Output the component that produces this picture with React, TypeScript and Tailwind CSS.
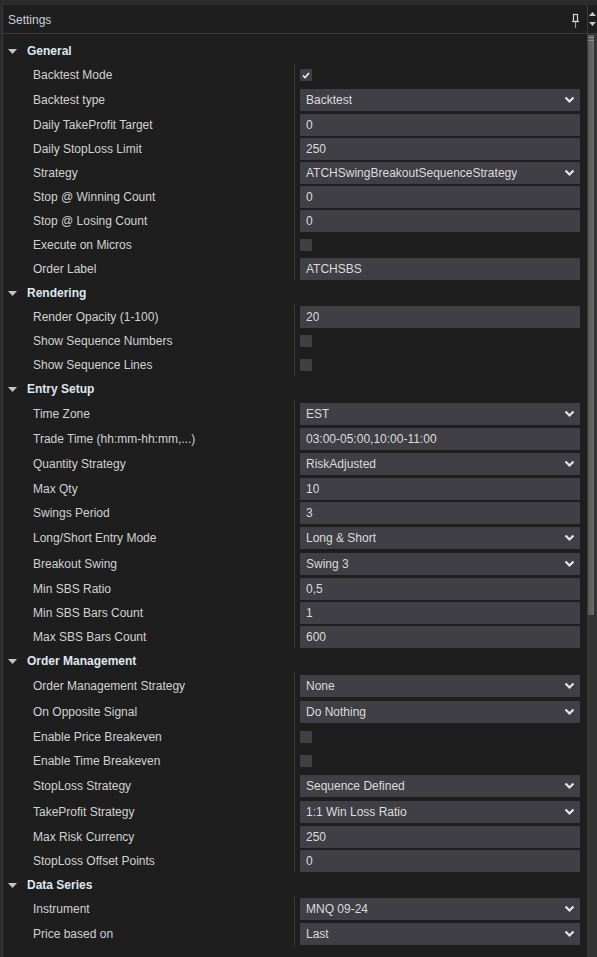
import React from "react";

type Row = {
  label: string;
  kind: "text" | "select" | "check";
  value?: string;
  checked?: boolean;
  h?: number;
};

type Group = { title: string; rows: Row[] };

const groups: Group[] = [
  {
    title: "General",
    rows: [
      { label: "Backtest Mode", kind: "check", checked: true },
      { label: "Backtest type", kind: "select", value: "Backtest", h: 26 },
      { label: "Daily TakeProfit Target", kind: "text", value: "0" },
      { label: "Daily StopLoss Limit", kind: "text", value: "250" },
      { label: "Strategy", kind: "select", value: "ATCHSwingBreakoutSequenceStrategy" },
      { label: "Stop @ Winning Count", kind: "text", value: "0" },
      { label: "Stop @ Losing Count", kind: "text", value: "0" },
      { label: "Execute on Micros", kind: "check" },
      { label: "Order Label", kind: "text", value: "ATCHSBS" },
    ],
  },
  {
    title: "Rendering",
    rows: [
      { label: "Render Opacity (1-100)", kind: "text", value: "20" },
      { label: "Show Sequence Numbers", kind: "check" },
      { label: "Show Sequence Lines", kind: "check" },
    ],
  },
  {
    title: "Entry Setup",
    rows: [
      { label: "Time Zone", kind: "select", value: "EST", h: 26 },
      { label: "Trade Time (hh:mm-hh:mm,...)", kind: "text", value: "03:00-05:00,10:00-11:00" },
      { label: "Quantity Strategy", kind: "select", value: "RiskAdjusted", h: 26 },
      { label: "Max Qty", kind: "text", value: "10" },
      { label: "Swings Period", kind: "text", value: "3" },
      { label: "Long/Short Entry Mode", kind: "select", value: "Long & Short", h: 26 },
      { label: "Breakout Swing", kind: "select", value: "Swing 3", h: 26 },
      { label: "Min SBS Ratio", kind: "text", value: "0,5" },
      { label: "Min SBS Bars Count", kind: "text", value: "1" },
      { label: "Max SBS Bars Count", kind: "text", value: "600" },
    ],
  },
  {
    title: "Order Management",
    rows: [
      { label: "Order Management Strategy", kind: "select", value: "None", h: 26 },
      { label: "On Opposite Signal", kind: "select", value: "Do Nothing", h: 26 },
      { label: "Enable Price Breakeven", kind: "check" },
      { label: "Enable Time Breakeven", kind: "check" },
      { label: "StopLoss Strategy", kind: "select", value: "Sequence Defined", h: 26 },
      { label: "TakeProfit Strategy", kind: "select", value: "1:1 Win Loss Ratio", h: 26 },
      { label: "Max Risk Currency", kind: "text", value: "250" },
      { label: "StopLoss Offset Points", kind: "text", value: "0" },
    ],
  },
  {
    title: "Data Series",
    rows: [
      { label: "Instrument", kind: "select", value: "MNQ 09-24" },
      { label: "Price based on", kind: "select", value: "Last", h: 26 },
    ],
  },
];

function Chevron() {
  return (
    <svg width="11" height="8" viewBox="0 0 11 8" className="shrink-0">
      <polyline points="1.5,1.5 5.5,5.5 9.5,1.5" fill="none" stroke="#e6e6e6" strokeWidth="2.2" />
    </svg>
  );
}

function Editor({ row }: { row: Row }) {
  if (row.kind === "check") {
    return (
      <span className="flex size-3 items-center justify-center bg-[#3f3f45]">
        {row.checked && (
          <svg width="8" height="7" viewBox="0 0 8 7">
            <polyline points="1,3.5 3,5.5 7,1" fill="none" stroke="#f0f0f0" strokeWidth="1.6" />
          </svg>
        )}
      </span>
    );
  }
  return (
    <div className="flex h-[22px] w-[280px] items-center justify-between bg-[#3f3f45] pl-[6px] pr-[5px] text-[#dcdcdc]">
      <span className="truncate">{row.value}</span>
      {row.kind === "select" && <Chevron />}
    </div>
  );
}

function Section({ group }: { group: Group }) {
  return (
    <div>
      <div className="flex h-6 items-center">
        <svg width="9" height="5" viewBox="0 0 9 5" className="ml-[5px] mr-[10px]">
          <polygon points="0,0 9,0 4.5,5" fill="#c4c4c4" />
        </svg>
        <span className="font-bold text-[#dfe6f1]">{group.title}</span>
      </div>
      {group.rows.map((row) => (
        <div
          key={row.label}
          className="grid grid-cols-[291px_1px_285px]"
          style={{ height: row.h ?? 24 }}
        >
          <div className="flex items-center pl-[30px] text-[#d2d2d2]">{row.label}</div>
          <div className="bg-[#3a3a3a]" />
          <div className="flex items-center pl-[5px]">
            <Editor row={row} />
          </div>
        </div>
      ))}
    </div>
  );
}

export default function App() {
  return (
    <div className="h-[957px] w-[597px] overflow-hidden bg-[#2c2c2c] pt-[5px] pl-[2px] font-['Liberation_Sans',Arial,sans-serif] text-[12px]">
      <div className="flex h-[952px] border-l border-[#3a3a3a] bg-[#1e1e1e]">
        <div className="flex-1">
          <div className="flex h-[29px] items-center justify-between border-b border-[#3c3c3c] pl-[5px] pr-[8px] pt-[2px]">
            <span className="text-[#c9d0da]">Settings</span>
            <svg width="7" height="15" viewBox="0 0 7 15">
              <rect x="1.5" y="1.5" width="4" height="7" fill="none" stroke="#d8d8d8" strokeWidth="1.2" />
              <line x1="0" y1="8.5" x2="7" y2="8.5" stroke="#d8d8d8" strokeWidth="1.2" />
              <line x1="3.5" y1="9" x2="3.5" y2="15" stroke="#9a9a9a" strokeWidth="1.2" />
            </svg>
          </div>
          <div className="pt-[5px]">
            {groups.map((g) => (
              <Section key={g.title} group={g} />
            ))}
          </div>
        </div>
        <div className="flex w-[10px] flex-col border-l border-[#3a3a3a] bg-[#333333]">
          <div className="flex h-[29px] flex-col items-center justify-center gap-[6px] border-b border-[#3c3c3c] bg-[#1e1e1e]">
            <svg width="7" height="4" viewBox="0 0 7 4">
              <polygon points="0,4 7,4 3.5,0" fill="#c8c8c8" />
            </svg>
            <svg width="7" height="4" viewBox="0 0 7 4">
              <polygon points="0,0 7,0 3.5,4" fill="#c8c8c8" />
            </svg>
          </div>
          <div className="mt-px flex h-[580px] w-[6px] flex-col gap-[2px] bg-gradient-to-r from-[#585858] to-[#6c6c6c] pt-[2px]">
            <div className="h-px bg-[#8a8a8a]" />
            <div className="h-px bg-[#8a8a8a]" />
          </div>
        </div>
      </div>
    </div>
  );
}
